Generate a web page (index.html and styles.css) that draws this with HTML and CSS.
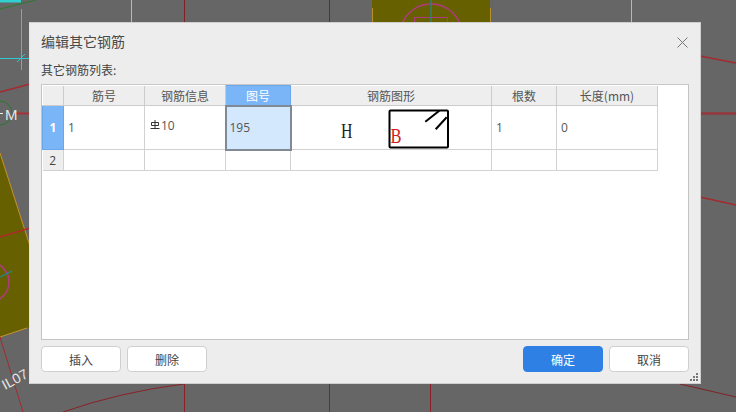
FILE: index.html
```html
<!DOCTYPE html>
<html lang="zh-CN">
<head>
  <meta charset="UTF-8">
  <meta name="viewport" content="width=device-width, initial-scale=1.0">
  <title>编辑其它钢筋</title>
  <link rel="stylesheet" href="styles.css">
</head>
<body>
  <!-- CAD drawing behind the dialog -->
  <svg class="canvas" width="736" height="412" viewBox="0 0 736 412">
    <polygon points="372,0 490,0 490,24 372,24" fill="#666000"/>
    <path d="M372.500 8V24M490.500 8V24" stroke="#b8902a" stroke-width="1"/>
    <circle cx="431" cy="35" r="31" fill="none" stroke="#b03a80" stroke-width="1.5"/>
    <rect x="414.500" y="17.500" width="33" height="8" fill="none" stroke="#b03a80"/>
    <path d="M431 0V24" stroke="#2f7f78" stroke-width="1.500"/>
    <path d="M131.500 0V24M631.500 0V24" stroke="#c8c83c" stroke-width="1"/>
    <path d="M184.500 0V24M329.500 0V24" stroke="#7f2226" stroke-width="1"/>
    <path d="M184.500 384V412M329.500 384V412M430.500 384V412" stroke="#8a2228" stroke-width="1"/>
    <path d="M0 1H21" stroke="#2fd0d0" stroke-width="3"/>
    <path d="M0 9L36 0" stroke="#2a7a30" stroke-width="1"/>
    <path d="M21.500 9V70M0 58.500H30M17 62L25 54" stroke="#2fc8d0" stroke-width="1"/>
    <path d="M0 92L30 84" stroke="#a52a30" stroke-width="1.500"/>
    <circle cx="0" cy="113" r="12" fill="none" stroke="#2a7a30"/>
    <path d="M0 113.500H3" stroke="#eeeeee" stroke-width="1"/>
    <path d="M16 113.500H30" stroke="#a53038" stroke-width="2"/>
    <text class="canvas-label" x="5" y="120">M</text>
    <polygon points="0,153 30,246 30,327 0,337" fill="#666000"/>
    <path d="M0 153L30 246M0 337L27 328" stroke="#c8902a" stroke-width="1"/>
    <path d="M0 237L30 228" stroke="#b02a2a" stroke-width="1.500"/>
    <circle cx="-11" cy="282" r="20" fill="none" stroke="#b03a80" stroke-width="1.500"/>
    <path d="M0 277L12 271" stroke="#2f7f78" stroke-width="1.500"/>
    <path d="M0 337L23 412" stroke="#a52a30" stroke-width="1"/>
    <text class="canvas-label canvas-label-small" transform="translate(5 390) rotate(-28)">IL07</text>
    <path d="M63 412Q120 392 184 384" fill="none" stroke="#8a2228" stroke-width="1"/>
    <path d="M700 56L736 63M700 197L736 205" stroke="#a52a30" stroke-width="1.500"/>
    <path d="M700 113.500H736" stroke="#96383e" stroke-width="2.500"/>
    <path d="M680 384L736 397" stroke="#7f2226" stroke-width="1"/>
  </svg>

  <div class="dialog">
    <div class="dialog-head">
      <h1 class="dialog-title">编辑其它钢筋</h1>
      <button class="close-btn" aria-label="关闭">
        <svg width="11" height="11" viewBox="0 0 11 11"><path d="M.5 .5L10.500 10.500M10.500 .5L.5 10.500" stroke="#777" stroke-width="1"/></svg>
      </button>
    </div>
    <div class="list-label">其它钢筋列表:</div>

    <div class="table-box">
      <table class="rebar-table">
        <colgroup>
          <col class="col-index">
          <col class="col-no">
          <col class="col-info">
          <col class="col-fig">
          <col class="col-shape">
          <col class="col-count">
          <col class="col-len">
        </colgroup>
        <thead>
          <tr>
            <th></th>
            <th>筋号</th>
            <th>钢筋信息</th>
            <th class="active-head">图号</th>
            <th>钢筋图形</th>
            <th>根数</th>
            <th>长度(mm)</th>
          </tr>
        </thead>
        <tbody>
          <tr class="row-tall">
            <td class="row-index active-index">1</td>
            <td>1</td>
            <td>
              <span class="grade">
                <svg width="10" height="10" viewBox="0 0 10 10"><path d="M1.500 2.500H8.500V5.500H1.500ZM5 0V8.500M.5 8.500H9.500" fill="none" stroke="#333" stroke-width="1"/></svg>10
              </span>
            </td>
            <td class="active-cell">195</td>
            <td class="shape-cell">
              <svg width="200" height="43" viewBox="0 0 200 43">
                <text class="shape-h" transform="translate(49 32) scale(.72 1)">H</text>
                <rect x="97.500" y="4.500" width="58.500" height="37" rx="1" fill="#fff" stroke="#000" stroke-width="2"/>
                <path d="M133.300 15.700L147.300 4.700M143.700 23.300L154.700 11.300" stroke="#000" stroke-width="2"/>
                <text class="shape-b" transform="translate(98.500 37.300) scale(.75 1)">B</text>
              </svg>
            </td>
            <td>1</td>
            <td>0</td>
          </tr>
          <tr class="row-short">
            <td class="row-index">2</td>
            <td></td>
            <td></td>
            <td></td>
            <td></td>
            <td></td>
            <td></td>
          </tr>
        </tbody>
      </table>
    </div>

    <div class="dialog-foot">
      <div class="btn-group">
        <button class="btn">插入</button>
        <button class="btn">删除</button>
      </div>
      <div class="btn-group">
        <button class="btn btn-primary">确定</button>
        <button class="btn">取消</button>
      </div>
    </div>

    <svg class="grip" width="8" height="8" viewBox="0 0 8 8">
      <path d="M6 0h2v2H6zM3 3h2v2H3zM6 3h2v2H6zM0 6h2v2H0zM3 6h2v2H3zM6 6h2v2H6z" fill="#777"/>
    </svg>
  </div>
</body>
</html>
```

FILE: styles.css
```css
* {
  box-sizing: border-box;
}
html, body {
  margin: 0;
  height: 100%;
}
body {
  position: relative;
  width: 736px;
  height: 412px;
  overflow: hidden;
  background-color: #666666;
  font-family: "Noto Sans CJK SC", "Open Sans", sans-serif;
  color: #444444;
}
.canvas {
  position: absolute;
  left: 0;
  top: 0;
}
.canvas-label {
  font-family: "Liberation Sans", sans-serif;
  font-size: 15px;
  fill: #e4e4e4;
}
.canvas-label-small {
  font-size: 14px;
}

.dialog {
  position: absolute;
  left: 29px;
  top: 22px;
  width: 672px;
  height: 362px;
  padding: 0 11px;
  display: flex;
  flex-direction: column;
  background-color: #eeeded;
  border: 1px solid #cfcfcf;
  border-left-color: #e4e4e4;
}
.dialog-head {
  height: 38px;
  display: flex;
  justify-content: space-between;
  align-items: center;
}
.dialog-title {
  margin: -2px 0 0;
  font-size: 14px;
  font-weight: 400;
  color: #4a4a4a;
}
.close-btn {
  padding: 0;
  margin-right: 1px;
  border: none;
  background: none;
  display: flex;
}
.list-label {
  height: 23px;
  font-size: 12px;
  line-height: 18px;
  color: #444444;
}

.table-box {
  width: 648px;
  height: 256px;
  background-color: #ffffff;
  border: 1px solid #c4c4c4;
  border-top-color: #c8c8c8;
}
.rebar-table {
  table-layout: fixed;
  width: 615px;
  border-collapse: collapse;
  font-size: 12px;
}
.col-index { width: 21px; }
.col-no { width: 81px; }
.col-info { width: 81px; }
.col-fig { width: 65px; }
.col-shape { width: 201px; }
.col-count { width: 65px; }
.col-len { width: 101px; }

.rebar-table th {
  height: 20px;
  padding: 0;
  font-weight: 400;
  color: #555555;
  background-color: #eeeeee;
  border-right: 1px solid #cccccc;
  border-bottom: 1px solid #cccccc;
}
.rebar-table td {
  padding: 0 0 0 4px;
  border-right: 1px solid #d2d2d2;
  border-bottom: 1px solid #d2d2d2;
  font-family: "Open Sans", "Noto Sans CJK SC", sans-serif;
  color: #555555;
}
.row-tall td {
  height: 44px;
}
.row-short td {
  height: 21px;
}
.rebar-table .row-index {
  padding: 0;
  text-align: center;
  background-color: #eeeeee;
  color: #444444;
}
.rebar-table .active-index {
  background-color: #7ab5f8;
  color: #ffffff;
  font-weight: 700;
  border: 1px solid #6aa6ea;
}
.rebar-table .active-head {
  background-color: #7ab5f8;
  color: #ffffff;
  border: 1px solid #6aa6ea;
}
.rebar-table .active-cell {
  background-color: #d3e7fd;
  border: 2px solid #808a94;
  padding-left: 3px;
}
.rebar-table .shape-cell {
  padding: 0;
  line-height: 0;
}
.grade {
  position: relative;
  top: -2px;
  padding-left: 1px;
  display: inline-flex;
  align-items: center;
}
.grade svg {
  margin: -2px 1px 0 0;
}
.shape-h {
  font-family: "Liberation Serif", serif;
  font-size: 22px;
  fill: #222222;
}
.shape-b {
  font-family: "Liberation Serif", serif;
  font-size: 22px;
  fill: #d2201f;
}

.dialog-foot {
  margin-top: 6px;
  width: 648px;
  display: flex;
  justify-content: space-between;
}
.btn-group {
  display: flex;
  gap: 6px;
}
.btn {
  width: 80px;
  height: 26px;
  padding: 0;
  font-family: "Noto Sans CJK SC", sans-serif;
  font-size: 12px;
  color: #444444;
  background-color: #ffffff;
  border: 1px solid #cfcfcf;
  border-radius: 4px;
}
.btn-primary {
  background-color: #2f80e4;
  border-color: #2f80e4;
  color: #ffffff;
}
.grip {
  position: absolute;
  right: 2px;
  bottom: 2px;
}
```
